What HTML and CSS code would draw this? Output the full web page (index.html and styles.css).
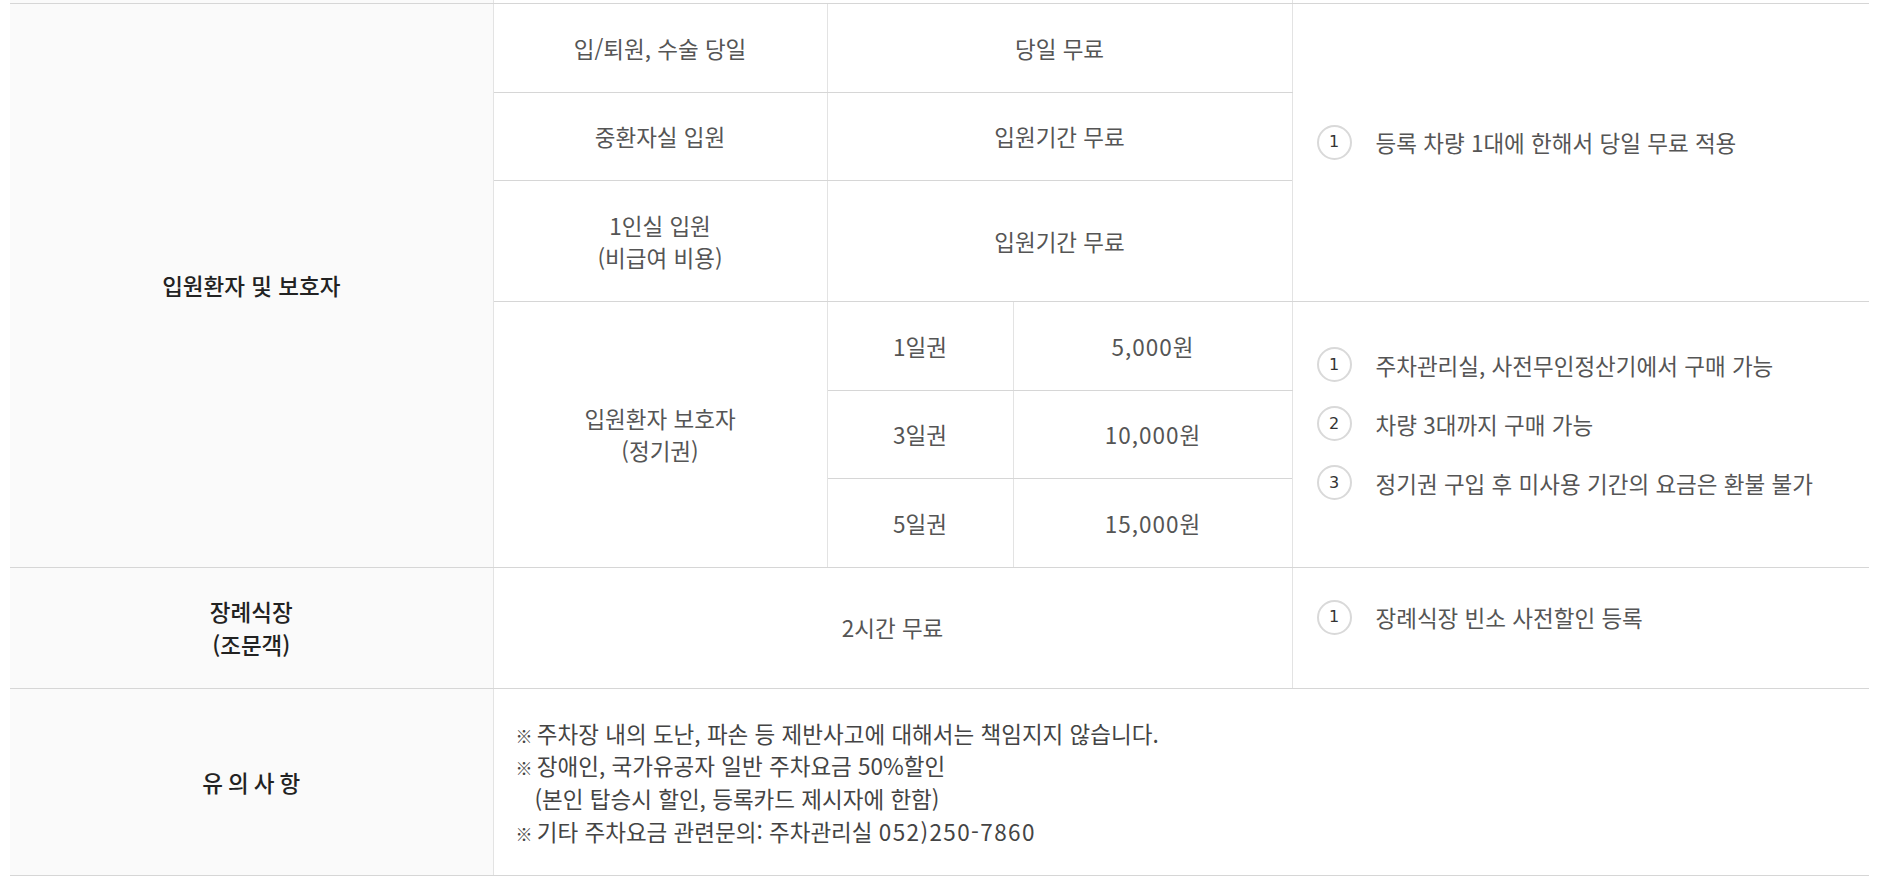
FILE: index.html
```html
<!DOCTYPE html>
<html lang="ko">
<head>
<meta charset="utf-8">
<title>주차요금 안내</title>
<link rel="stylesheet" href="styles.css">
</head>
<body>
<div class="wrap">
  <table class="fee">
    <colgroup>
      <col class="c1">
      <col class="c2">
      <col class="c3">
      <col class="c4">
      <col class="c5">
    </colgroup>
    <tbody>
      <tr class="stub">
        <td class="head"></td>
        <td colspan="3"></td>
        <td></td>
      </tr>
      <tr>
        <th class="head" rowspan="6">입원환자 및 보호자</th>
        <td>입/퇴원, 수술 당일</td>
        <td colspan="2">당일 무료</td>
        <td class="note" rowspan="3">
          <ul class="list">
            <li><span class="num">1</span><span>등록 차량 1대에 한해서 당일 무료 적용</span></li>
          </ul>
        </td>
      </tr>
      <tr>
        <td>중환자실 입원</td>
        <td colspan="2">입원기간 무료</td>
      </tr>
      <tr>
        <td>1인실 입원<br>(비급여 비용)</td>
        <td colspan="2">입원기간 무료</td>
      </tr>
      <tr>
        <td rowspan="3">입원환자 보호자<br>(정기권)</td>
        <td>1일권</td>
        <td><span class="digits">5,000</span>원</td>
        <td class="note" rowspan="3">
          <ul class="list">
            <li><span class="num">1</span><span>주차관리실, 사전무인정산기에서 구매 가능</span></li>
            <li><span class="num">2</span><span>차량 3대까지 구매 가능</span></li>
            <li><span class="num">3</span><span>정기권 구입 후 미사용 기간의 요금은 환불 불가</span></li>
          </ul>
        </td>
      </tr>
      <tr>
        <td>3일권</td>
        <td><span class="digits">10,000</span>원</td>
      </tr>
      <tr>
        <td>5일권</td>
        <td><span class="digits">15,000</span>원</td>
      </tr>
      <tr>
        <th class="head">장례식장<br>(조문객)</th>
        <td colspan="3">2시간 무료</td>
        <td class="note">
          <ul class="list">
            <li><span class="num">1</span><span>장례식장 빈소 사전할인 등록</span></li>
          </ul>
        </td>
      </tr>
      <tr class="last">
        <th class="head spaced">유의사항</th>
        <td class="caution" colspan="4">
          <p><span class="mark">※</span> 주차장 내의 도난, 파손 등 제반사고에 대해서는 책임지지 않습니다.</p>
          <p><span class="mark">※</span> 장애인, 국가유공자 일반 주차요금 50%할인</p>
          <p class="indent">(본인 탑승시 할인, 등록카드 제시자에 한함)</p>
          <p><span class="mark">※</span> 기타 주차요금 관련문의: 주차관리실 <span class="digits">052)250-7860</span></p>
        </td>
      </tr>
    </tbody>
  </table>
</div>
</body>
</html>
```

FILE: styles.css
```css
html, body {
  margin: 0;
  padding: 0;
  background: #ffffff;
}

body {
  font-family: "Noto Sans CJK KR", "Noto Sans", sans-serif;
  color: #555555;
}

.wrap {
  padding: 0 10px;
}

.fee {
  width: 100%;
  border-collapse: collapse;
  table-layout: fixed;
}

.c1 { width: 483px; }
.c2 { width: 334px; }
.c3 { width: 186px; }
.c4 { width: 279px; }
.c5 { width: auto; }

.fee th,
.fee td {
  font-size: 22.5px;
  line-height: 32.5px;
  font-weight: 400;
  text-align: center;
  vertical-align: middle;
  padding: 27.5px 10px;
  border-top: 1px solid #d6d6d6;
  border-bottom: 1px solid #d6d6d6;
  border-left: 1px solid #e3e3e3;
  border-right: 1px solid #e3e3e3;
  color: #555555;
}

.fee th.head {
  background: #fafafa;
  color: #222222;
  font-weight: 500;
  border-left: none;
}

.fee th.spaced {
  letter-spacing: 5px;
  text-indent: 5px;
}

.fee tr > *:last-child {
  border-right: none;
}

.fee .stub td {
  height: 3px;
  padding: 0;
  border-top: none;
  line-height: 0;
  font-size: 0;
}

.fee .stub td.head {
  background: #fafafa;
  border-left: none;
}

.digits {
  letter-spacing: 1px;
}

.fee td.note {
  text-align: left;
  padding: 0 20px 0 24px;
}

.list {
  list-style: none;
  margin: 0;
  padding: 0;
}

.list li {
  display: flex;
  align-items: center;
  gap: 24px;
  min-height: 38px;
  margin-bottom: 21px;
  color: #555555;
}

.num {
  flex: 0 0 auto;
  box-sizing: border-box;
  width: 35px;
  height: 35px;
  border: 2px solid #d9d9d9;
  border-radius: 50%;
  display: flex;
  align-items: center;
  justify-content: center;
  font-family: "DejaVu Sans", sans-serif;
  font-size: 16px;
  line-height: 1;
  color: #333333;
}

.fee td.caution {
  text-align: left;
  padding: 28px 22px;
  color: #444444;
}

.caution p {
  margin: 0;
  height: 32.7px;
  line-height: 32.7px;
}

.caution .mark {
  font-size: 17px;
  line-height: 1;
  letter-spacing: -2px;
}

.caution .digits {
  letter-spacing: 1.4px;
}

.caution p.indent {
  padding-left: 19px;
}
```
